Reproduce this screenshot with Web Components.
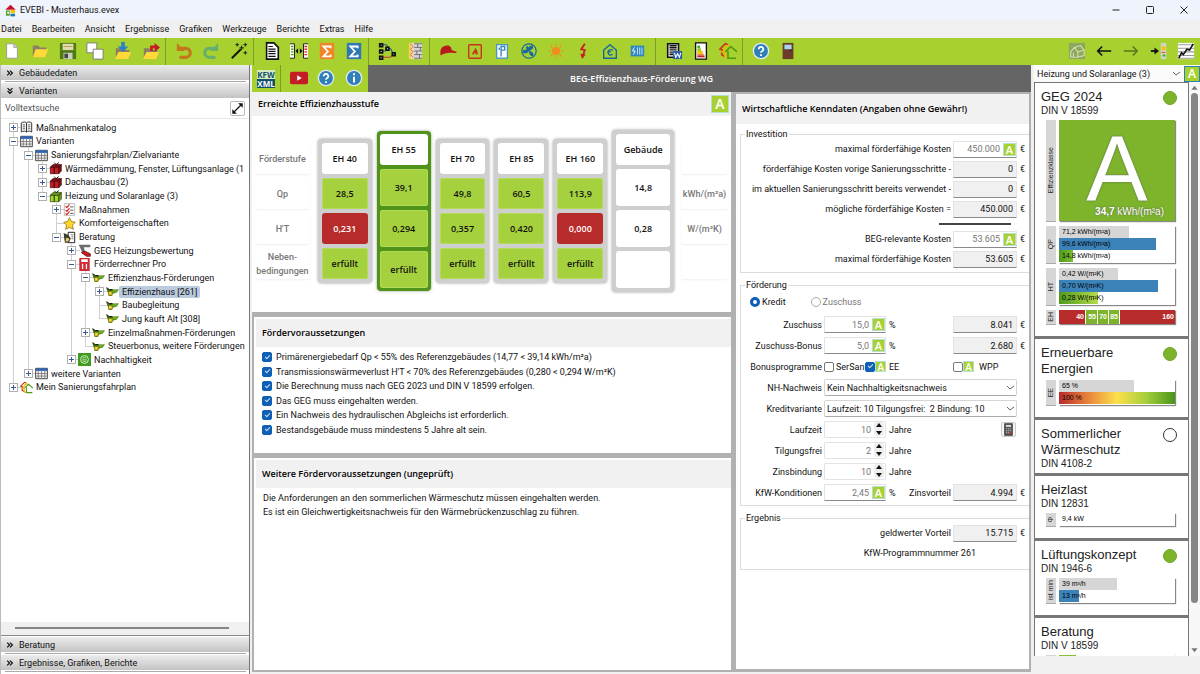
<!DOCTYPE html>
<html lang="de">
<head>
<meta charset="utf-8">
<title>EVEBI - Musterhaus.evex</title>
<style>
  html, body { height: 100%; }
  body {
    margin: 0; overflow: hidden; background: #f0f0f0; color: #111;
    font: 9px/12px Roboto, "Open Sans", sans-serif;
    --strong: 600 9px/12px "Open Sans", sans-serif;
    --lime: #a8d12f; --leaf: #7db42c; --band: #b1b1b1; --blue: #0f5fb5; --red: #b82b2b;
  }
</style>
</head>
<body>
<evebi-app></evebi-app>
<script>
const ICONS = {
  logo: '<path d="M2 9 10 1l8 8z" fill="#c8102e"/><path d="M3 10h6v8H3z" fill="#5aa02c"/><path d="M10 9h7v5h-7z" fill="#f4c400"/><path d="M10 15h7v4h-7z" fill="#1f77b4"/><path d="M5 12h3v3H5z" fill="#fff"/>',
  new: '<path d="M4 2h8l4 4v12H4z" fill="#fff" stroke="#999"/><path d="M12 2v4h4" fill="#ddd" stroke="#999"/>',
  open: '<path d="M2 4h6l2 2h7v10H2z" fill="#8c8160"/><path d="M5 8h14l-3 9H2z" fill="#ffd83a"/>',
  save: '<path d="M1 1h18v18H1z" fill="#4e7c12"/><path d="M4 2h12v7H4z" fill="#e0dcb0"/><path d="M5 5h10" stroke="#b99a50"/><path d="M5 12h10v7H5z" fill="#c8cfc0"/><path d="M6 13h4v5H6z" fill="#444"/>',
  copy: '<path d="M1 1h11v11H1z" fill="#fff" stroke="#777"/><path d="M8 8h11v11H8z" fill="#fff" stroke="#777"/>',
  import: '<path d="M2 7h6l2 2h7v9H2z" fill="#8c8160"/><path d="M5 11h14l-3 8H1z" fill="#ffd83a"/><path d="M8 0h4v5h4l-6 6-6-6h4z" fill="#2f80c2"/>',
  export: '<path d="M2 7h6l2 2h7v9H2z" fill="#8c8160"/><path d="M5 11h14l-3 8H1z" fill="#ffd83a"/><path d="M9 10V4h5V1l6 5-6 5V7h-2v3z" fill="#c41e24"/>',
  undo: '<path d="M5 7h7a4 4 0 0 1 0 10H5" fill="none" stroke="#c4771c" stroke-width="3.500"/><path d="M2 1v9h9z" fill="#c4771c"/>',
  redo: '<path d="M15 17H8A4 4 0 0 1 8 7h7" fill="none" stroke="#67b06c" stroke-width="3.500"/><path d="M18 1v9H9z" fill="#67b06c"/>',
  wand: '<path d="m2 18 10-10" stroke="#111" stroke-width="2.200"/><path d="M13 4v5M10.500 6.500h5M17 1v4M15 3h4M8 1v4M6 3h4M17 10v4M15 12h4" stroke="#111"/>',
  doc: '<path d="M4 1h8l5 5v13H4z" fill="#fff" stroke="#111" stroke-width="1.800"/><path d="M6 5h5M6 8h8M6 10.500h8M6 13h8M6 16h8" stroke="#111" stroke-width="1.300"/>',
  compare: '<path d="M0 2h5v16H0M20 2h-5v16h5" fill="#fff" stroke="#111"/><path d="M1 5h3M1 8h3M1 11h3M1 14h3" stroke="#5a9b1c" stroke-width="1.500"/><path d="M16 5h3M16 8h3M16 11h3M16 14h3" stroke="#d22" stroke-width="1.500"/><path d="m6 10 3-3v6zM14 10l-3-3v6z" fill="#111"/>',
  sumo: '<path d="M2 1h16v18H2z" fill="#f08426"/><path d="M14 7V5H6l5 5.500L6 16h8v-2" fill="none" stroke="#fff" stroke-width="2"/>',
  sumb: '<path d="M2 1h16v18H2z" fill="#2f78b4"/><path d="M14 7V5H6l5 5.500L6 16h8v-2" fill="none" stroke="#fff" stroke-width="2"/>',
  nodes: '<path d="M4 3h5c2 0 1 4 3 4 4 0 3 5 5 5" fill="none" stroke="#2457a0" stroke-width="1.200"/><path d="M4 10h4c2 0 1-3 4-3" fill="none" stroke="#2457a0" stroke-width="1.200"/><path d="M4 17h9c3 0 2-4 5-4" fill="none" stroke="#c33" stroke-width="1.200"/><g fill="#111"><path d="M1 1h5v5H1zM1 8h5v5H1zM1 15h5v5H1zM8 5h5v5H8zM15 11h5v5h-5z"/></g><path d="M3 3h1v1H3zM3 10h1v1H3zM3 17h1v1H3zM10 7h1v1h-1zM17 13h1v1h-1z" fill="#fff"/>',
  wall: '<path d="M3 1h2v18H3z" fill="#f5d23b"/><path d="M5 1h4v18H5z" fill="#f0d8b0"/><path d="M9 1h9v18H9z" fill="#d6d6d6"/><path d="M9 2h9M9 6h9M9 10h9M9 14h9M9 18h9M13 2v4M16 6v4M12 10v4M15 14v4" stroke="#666"/><path d="m5 2 3 3-3 3 3 3-3 3 3 3" stroke="#d55" fill="none"/>',
  cap: '<path d="M2 15C0 8 4 4 9 4c4 0 5 3 5 5l6 2c-1 2-5 1-8 1-4 0-7 1-10 3z" fill="#b71c1c"/>',
  flame: '<rect x="3" y="3" width="14" height="15" rx="1" fill="none" stroke="#c8321e" stroke-width="1.500"/><path d="M7 14c0-4 3-4 3-8 3 3 3 5 3 8h-2l-1-3-1 3z" fill="#c8321e"/>',
  meter: '<rect x="4" y="3" width="12" height="15" fill="#fff" stroke="#4a95c8" stroke-width="1.500"/><path d="M9 16V5h4v4H9M7 6v3" fill="none" stroke="#3585bd" stroke-width="1.500"/>',
  fan: '<circle cx="10" cy="10" r="8" fill="none" stroke="#1767a0" stroke-width="1.300"/><path d="M10 10c-1-2 0-6 3-6 3 1 2 4-3 6zM10 10c2 0 6 2 5 5-2 2-5 0-5-5zM10 10c-1 2-5 4-7 2-1-3 2-5 7-2zM10 10c-3-1-4-3-3-5 2-1 4 1 3 5z" fill="#1767a0"/>',
  sun: '<circle cx="10" cy="10" r="4.500" fill="#f58b1e"/><path d="M10 2v2M10 16v2M2 10h2M16 10h2M4 4l2 2M14 14l2 2M16 4l-2 2M6 14l-2 2" stroke="#f58b1e" stroke-width="1.500"/>',
  bolt: '<path d="M12 2 8 8l4 1-2 6" fill="none" stroke="#c41e24" stroke-width="2"/><path d="m7 13 2 6 4-5z" fill="#c41e24"/>',
  euro: '<path d="m3 9 7-6 7 6v9H3z" fill="none" stroke="#1767a0" stroke-width="1.500"/><path d="M13 9.500a3 3 0 1 0 0 4M7 11h4" fill="none" stroke="#1767a0" stroke-width="1.500"/>',
  radiator: '<rect x="3" y="4" width="15" height="12" fill="#2f87c0"/><path d="M10.500 6v8M13 6v8M15.500 6v8" stroke="#cfe6f5"/><path d="m7 6-2 4h3l-2 4" stroke="#fff" fill="none"/>',
  word: '<path d="M3 2h12v15H3z" fill="#fff" stroke="#111" stroke-width="1.800"/><path d="M5 4h8M5 6h8M5 8h8M5 10h8M5 12h4M5 14h4" stroke="#111" stroke-width="1.300"/><path d="M9 10h10v9H9z" fill="#2c5fa8"/><path d="m10.500 12 1.500 5 2-4 2 4 1.500-5" stroke="#fff" fill="none" stroke-width="1.200"/>',
  label: '<path d="M4 1h12v18H4z" fill="#fff" stroke="#111" stroke-width="1.500"/><path d="M6 4h3v3H6z" fill="#4a2"/><path d="M6 7h4v3H6z" fill="#9c2"/><path d="M6 10h6v3H6z" fill="#f5c400"/><path d="M6 13h7v2H6z" fill="#f08426"/><path d="M6 15h8v2H6z" fill="#c41e24"/>',
  houses: '<path d="M6 16 3 14l1-5-3-1 6-6 3 1" fill="none" stroke="#c8321e" stroke-width="1.800"/><path d="M9 17H7l-1-6H4l5-7 3 1" fill="none" stroke="#f5b400" stroke-width="1.800"/><path d="m7 11 6-6 7 6M10 10v8h9" fill="none" stroke="#4d9a16" stroke-width="1.800"/>',
  help: '<circle cx="10" cy="10" r="8.500" fill="#2f7fb8" stroke="#e0eaf2" stroke-width="1.500"/><path d="M7.500 8a2.500 2.500 0 1 1 3.500 2.300c-1 .5-1 .9-1 1.700M10 13.500v2" fill="none" stroke="#fff" stroke-width="2"/>',
  info: '<circle cx="10" cy="10" r="8.500" fill="#2f7fb8" stroke="#e0eaf2" stroke-width="1.500"/><path d="M10 8.500V15M10 4.800V7" stroke="#fff" stroke-width="2.200"/>',
  door: '<path d="M4 1h12v18H4z" fill="#6d3b2b"/><path d="M6 3h8v5H6z" fill="#a9d4ee"/><path d="M12 9h3v1h-3z" fill="#222"/>',
  home3d: '<path d="M1 1h18v18H1z" fill="#8fa75c"/><path d="m3 11 4-5 7-2 4 5v6l-8 2H3zM7 6l4 5v6M11 11l7-2M6 17v-5" fill="none" stroke="#d3dfb5" stroke-width="1.200"/>',
  left: '<path d="M3 10h15M8 5l-5 5 5 5" fill="none" stroke="#111" stroke-width="1.800"/>',
  right: '<path d="M2 10h15M12 5l5 5-5 5" fill="none" stroke="#55761c" stroke-width="1.600"/>',
  dock: '<path d="M1 10h5" stroke="#111" stroke-width="2"/><path d="M5 6v8l5-4z" fill="#111"/><path d="M12 1h6v18h-6z" fill="#d3d3c4"/><path d="M13 5h4v4h-4z" fill="#f5c400"/><path d="M13 11h4v1h-4z" fill="#d33"/><path d="M14 14h3v2h-3z" fill="#3a3"/>',
  chart: '<path d="M1 1h18v18H1z" fill="#fff"/><path d="M1 3h18M1 7h18M1 11h18M1 15h18M1 18h18" stroke="#999" stroke-width="1.200"/><path d="m2 18 3-6 2 2 4-6 3 1 4-7" fill="none" stroke="#111" stroke-width="1.800"/>',
  video: '<rect x="0" y="3" width="20" height="14" rx="2" fill="#c41e24"/><path d="m8 7 5 3-5 3z" fill="#fff"/>',
  book: '<path d="M2 3c3-2 6-2 8 0v14c-2-2-5-2-8 0zM18 3c-3-2-6-2-8 0v14c2-2 5-2 8 0z" fill="#fff" stroke="#333" stroke-width="1.500"/><path d="M4 6h4M4 9h4M4 12h4M12 6h4M12 9h4M12 12h4" stroke="#444" stroke-width="1.300"/>',
  table: '<path d="M1 2h18v16H1z" fill="#f2f2f2" stroke="#444" stroke-width="1.500"/><path d="M1 2h18v4H1z" fill="#3264b4"/><path d="M5 6v12M10 6v12M15 6v12M2 10h16M2 14h16" stroke="#777" stroke-width="1.300"/>',
  cubered: '<path d="M2 8h13v10H2z" fill="#c41e24" stroke="#400"/><path d="m2 8 4-4h13l-4 4zM19 4v10l-4 4V8z" fill="#801018" stroke="#400"/><path d="M8 8v10M11 4 8 1M11 4l4-3" stroke="#200" stroke-width="1.500"/>',
  cubegreen: '<path d="M2 8h13v10H2z" fill="#a5d82f" stroke="#230"/><path d="m2 8 4-4h13l-4 4zM19 4v10l-4 4V8z" fill="#6fa01c" stroke="#230"/><path d="M8 8v10M11 4 8 1M11 4l4-3" stroke="#120" stroke-width="1.500"/>',
  checks: '<path d="M2 1h16v18H2z" fill="#fff" stroke="#999"/><path d="m4 5 2 2 4-5M4 11l2 2 4-5M4 16l2 2 4-5" fill="none" stroke="#d22" stroke-width="1.800"/><path d="M11 6h5M11 11h5M11 16h5" stroke="#555" stroke-width="1.500"/>',
  star: '<path d="m10 1 3 6 6 1-4.500 4.500L16 19l-6-3-6 3 1.500-6.500L1 8l6-1z" fill="#ffd52e" stroke="#7a5a00"/>',
  advice: '<path d="M8 2h10v16H8z" fill="#fff" stroke="#222" stroke-width="1.500"/><path d="M12 6h4M13 9h3M13 12h3" stroke="#333"/><path d="m1 3 7 3 4 5-3 7H3l-1-6z" fill="#3b3a2a"/><path d="m5 10 5 2-2 4H4z" fill="#e6d264"/>',
  geg: '<path d="M1 1h18v4H9l2 8-5-1-3-7z" fill="#6c6c6c"/><path d="m5 13 6-2 8 4v4h-6z" fill="#c41e24" stroke="#500"/>',
  calcred: '<path d="M2 0h16v20H2z" fill="#d22832"/><path d="M5 2h10v4H5zM6 9h2v8H6zM12 9h2v8h-2z" fill="#fff"/>',
  bird: '<path d="m0 4 5 3h15l-4 5-5 1-2 4H4l-1-5z" fill="#3f6d12"/><path d="m10 8 9-1-4 5-5-1z" fill="#6fae22"/><path d="M4 10h6v6H4z" fill="#c9a91a"/><path d="M5 11h3v3H5z" fill="#f5e050"/><path d="m1 4 4 3h5" stroke="#111" fill="none" stroke-width="1.500"/>',
  eco: '<rect x="0" y="0" width="20" height="20" fill="#3f9b1e"/><circle cx="10" cy="10" r="6" fill="none" stroke="#d5efc4" stroke-width="1.500"/><path d="M7 9c2-3 5-2 6-1M7 12c2 2 5 1 6 0M7 10.500h6" fill="none" stroke="#d5efc4" stroke-width="1.300"/>',
  calc: '<path d="M4 1h12v18H4z" fill="#555" stroke="#222"/><path d="M6 3h8v3H6z" fill="#ddd"/><path d="M6 9h8M6 12h8M6 15h8" stroke="#bbb" stroke-width="1.500" stroke-dasharray="2 1"/><path d="M12 14h2v3h-2z" fill="#d22"/>',
  expand: '<path d="m5 15 10-10" stroke="#111" stroke-width="2"/><path d="M11 2h7v7zM2 11v7h7z" fill="#111"/>',
  chevr: '<path d="m3 4 6 6-6 6M10 4l6 6-6 6" fill="none" stroke="#111" stroke-width="3"/>',
  chevd: '<path d="m4 3 6 6 6-6M4 10l6 6 6-6" fill="none" stroke="#111" stroke-width="3"/>',
  min: '<path d="M3 10h14" stroke="#222" stroke-width="2"/>',
  max: '<rect x="3" y="3" width="14" height="14" rx="2" fill="none" stroke="#222" stroke-width="2"/>',
  close: '<path d="m3 3 14 14M17 3 3 17" stroke="#222" stroke-width="2"/>',
  up: '<path d="m3 15 7-9 7 9z" fill="#777"/>',
  down: '<path d="m3 5 7 9 7-9z" fill="#777"/>'
};

const define = (name, html, setup) => customElements.define(name, class extends HTMLElement {
  connectedCallback() {
    if (this.shadowRoot) return;
    const root = this.attachShadow({ mode: 'open' });
    root.innerHTML = typeof html === 'function' ? html(this) : html;
    if (setup) setup(root, this);
  }
});

define('ev-icon', el => `<style>
  :host { display: inline-block; width: 18px; height: 18px; flex: none; }
  svg { display: block; width: 100%; height: 100%; }
</style><svg viewBox="0 0 20 20" aria-hidden="true">${ICONS[el.getAttribute('name')]}</svg>`);

/* Button that switches a value back to "automatic" */
define('ev-auto', `<style>
  :host { display: inline-block; width: 13px; height: 13px; flex: none; }
  button { display: grid; place-items: center; width: 100%; height: 100%; padding: 0; border: 1px solid #b4e0d2;
    background: var(--lime); color: #fff; font: 600 var(--auto-size, 11px)/1 "Open Sans", sans-serif; }
</style><button type="button" aria-label="Automatik">A</button>`);

define('ev-tools', el => `<style>
  :host { display: grid; box-sizing: border-box; grid-auto-flow: column; grid-auto-columns: 1fr; height: 27px; padding-bottom: 1px; }
  :host([sep]) { border-left: 1px solid #7d9c2a; padding-left: 4px; }
  button { display: grid; place-items: center; padding: 0; border: 0; background: none; min-width: 0; }
</style>${el.getAttribute('icons').split(' ').map(n => `<button type="button" aria-label="${n}"><ev-icon name="${n}"></ev-icon></button>`).join('')}`);

define('ev-titlebar', `<style>
  :host { display: flex; align-items: center; height: 20px; padding: 0 10px 0 4px; background: #eff3fb; }
  ev-icon { width: 13px; height: 13px; }
  span { flex: 1; margin-left: 3px; }
  button { width: 13px; height: 13px; margin-left: 21px; padding: 0; border: 0; background: none; display: grid; place-items: center; }
  button ev-icon { width: 10px; height: 10px; }
</style><ev-icon name="logo"></ev-icon><span>EVEBI - Musterhaus.evex</span>
<button aria-label="Minimieren"><ev-icon name="min"></ev-icon></button><button aria-label="Maximieren"><ev-icon name="max"></ev-icon></button><button aria-label="Schließen"><ev-icon name="close"></ev-icon></button>`);

define('ev-menubar', `<style>
  :host { display: block; height: 18px; background: #f0f0f0; }
  nav { display: flex; gap: 10px; padding: 3px 1px; }
  a { color: inherit; text-decoration: none; }
</style><nav>${['Datei','Bearbeiten','Ansicht','Ergebnisse','Grafiken','Werkzeuge','Berichte','Extras','Hilfe'].map(t => `<a href="#">${t}</a>`).join('')}</nav>`);

define('ev-toolbar', `<style>
  :host { display: flex; height: 27px; background: var(--lime); overflow: hidden; }
  .file { width: 167px; margin-left: -2px; } .edit { width: 88px; } .calc { width: 115px; } .net { width: 61px; }
  .parts { width: 226px; padding-right: 4px; } .rep { width: 87px; } .help { width: 60px; } .view { width: 137px; margin-left: auto; }
</style>
<ev-tools class="file" icons="new open save copy import export"></ev-tools>
<ev-tools sep class="edit" icons="undo redo wand"></ev-tools>
<ev-tools sep class="calc" icons="doc compare sumo sumb"></ev-tools>
<ev-tools sep class="net" icons="nodes wall"></ev-tools>
<ev-tools sep class="parts" icons="cap flame meter fan sun bolt euro radiator"></ev-tools>
<ev-tools sep class="rep" icons="word label houses"></ev-tools>
<ev-tools sep class="help" icons="help door"></ev-tools>
<ev-tools class="view" icons="home3d left right dock chart"></ev-tools>`);

define('ev-section-head', el => `<style>
  :host { display: block; padding-bottom: 1px; background: #fff; }
  button { display: flex; align-items: center; gap: 5px; width: 100%; height: 15px; padding: 0 5px; border: 0;
    background: linear-gradient(#ececec, #c3c3c3); font: inherit; color: inherit; }
  ev-icon { width: 8px; height: 8px; }
  hr { margin: 1px 3px 0 4px; border: 0; border-top: 1px solid #aaa; }
  :host([open]) { padding: 0; } :host([open]) hr { display: none; }
</style><button type="button" aria-expanded="${el.hasAttribute('open')}"><ev-icon name="${el.hasAttribute('open') ? 'chevd' : 'chevr'}"></ev-icon><slot></slot></button><hr>`);

const TREE = [
  [0,'+','book','Maßnahmenkatalog'],[0,'-','table','Varianten'],[1,'-','table','Sanierungsfahrplan/Zielvariante'],
  [2,'+','cubered','Wärmedämmung, Fenster, Lüftungsanlage (1'],[2,'+','cubered','Dachausbau (2)'],[2,'-','cubegreen','Heizung und Solaranlage (3)'],
  [3,'+','checks','Maßnahmen'],[3,'','star','Komforteigenschaften'],[3,'-','advice','Beratung'],
  [4,'+','geg','GEG Heizungsbewertung'],[4,'-','calcred','Förderrechner Pro'],[5,'-','bird','Effizienzhaus-Förderungen'],
  [6,'+','bird','Effizienzhaus [261]',1],[6,'','bird','Baubegleitung'],[6,'','bird','Jung kauft Alt [308]'],
  [5,'+','bird','Einzelmaßnahmen-Förderungen'],[5,'','bird','Steuerbonus, weitere Förderungen'],
  [4,'+','eco','Nachhaltigkeit'],[1,'+','table','weitere Varianten'],[0,'+','houses','Mein Sanierungsfahrplan']
];
const INDENT = [8, 23, 37, 51, 66, 80, 94];
define('ev-tree', () => {
  const goesOn = (i, k) => { for (let j = i + 1; j < TREE.length; j++) { if (TREE[j][0] < k) return false; if (TREE[j][0] === k) return true; } return false; };
  const grey = 'linear-gradient(#cfcfcf,#cfcfcf)';
  const rows = TREE.map(([lv, sign, icon, text, sel], i) => {
    const bg = [`${grey} ${INDENT[lv] + 4}px 50% / 9px 1px no-repeat`, `${grey} ${INDENT[lv] + 4}px 0 / 1px 50% no-repeat`];
    for (let k = 0; k <= lv; k++) if (goesOn(i, k)) bg.push(`${grey} ${INDENT[k] + 4}px 0 / 1px 100% no-repeat`);
    return `<li role="treeitem" aria-level="${lv + 1}"${sel ? ' aria-selected="true"' : ''} style="padding-left:${INDENT[lv]}px;background:${bg.join()}">
      <i class="${sign ? 'box' : ''}${sign === '+' ? ' plus' : ''}"></i><ev-icon name="${icon}"></ev-icon><span>${text}</span></li>`;
  }).join('');
  return `<style>
  :host { display: block; overflow: hidden; }
  ul { list-style: none; margin: 0; padding: 0; display: grid; grid-auto-rows: 1fr; height: 273px; }
  li { display: flex; align-items: center; white-space: nowrap; min-height: 0; }
  i { width: 9px; height: 9px; box-sizing: border-box; flex: none; margin-right: 2px; }
  .box { border: 1px solid #b0b0b0; background: linear-gradient(#3b5b94,#3b5b94) 50% 50% / 5px 1px no-repeat #fff; }
  .plus { background: linear-gradient(#3b5b94,#3b5b94) 50% 50% / 5px 1px no-repeat, linear-gradient(#3b5b94,#3b5b94) 50% 50% / 1px 5px no-repeat #fff; }
  ev-icon { width: 13px; height: 13px; }
  span { padding: 0 3px; }
  [aria-selected] span { background: #b9cbdd; border-radius: 2px; }
</style><ul role="tree">${rows}</ul>`;
});

define('ev-sidebar', `<style>
  :host { display: flex; flex-direction: column; background: #fff; border-right: 1px solid #777; border-left: 1px solid #bbb; box-sizing: border-box; min-height: 0; overflow: hidden; padding-bottom: 1px; }
  .search { display: flex; align-items: center; height: 21px; padding: 0 4px 0 4px; border-bottom: 1px solid #e8e8e8; box-sizing: border-box; }
  input { flex: 1; min-width: 0; border: 0; padding: 0; font: inherit; background: none; outline: 0; }
  input::placeholder { color: #555; opacity: 1; }
  .search button { width: 15px; height: 15px; padding: 0; display: grid; place-items: center; background: #fff; border: 1px solid #bbb; border-radius: 2px; }
  .search ev-icon { width: 13px; height: 13px; }
  ev-tree { flex: 1; margin: 2px 2px 0 0; }
  .scroll { height: 14px; background: #f0f0f0; border-bottom: 1px solid #888; padding: 5px 20px 0 14px; box-sizing: border-box; margin-bottom: 1px; }
  .scroll div { height: 2px; background: #858585; }
</style>
<ev-section-head>Gebäudedaten</ev-section-head>
<ev-section-head open>Varianten</ev-section-head>
<div class="search"><input aria-label="Volltextsuche" placeholder="Volltextsuche"><button aria-label="Erweitern"><ev-icon name="expand"></ev-icon></button></div>
<ev-tree></ev-tree>
<div class="scroll"><div></div></div>
<ev-section-head>Beratung</ev-section-head>
<ev-section-head>Ergebnisse, Grafiken, Berichte</ev-section-head>`);

define('ev-page-head', `<style>
  :host { display: grid; grid-template-columns: 1fr auto 1fr; align-items: center; background: #656565; height: 27px; }
  .tools { display: flex; width: 116px; background: var(--lime); }
  .kfw { display: grid; place-items: center; width: 28px; padding: 0; border: 0; background: none; }
  .kfw span { display: block; width: 18px; font: 700 8px/9px "Open Sans", sans-serif; color: #10506e; text-align: center; background: #d5ecc0; }
  .kfw span + span { background: #10506e; color: #fff; }
  ev-tools { flex: 1; }
  h1 { margin: 0; font: var(--strong); color: #fff; }
</style><div class="tools"><button class="kfw"><div><span>KFW</span><span>XML</span></div></button><ev-tools sep icons="video help info"></ev-tools></div>
<h1>BEG-Effizienzhaus-Förderung WG</h1><div></div>`);

/* One column of the comparison: heading cell followed by its values */
define('ev-stage', el => `<style>
  :host { display: grid; box-sizing: border-box; width: 54px; grid-template-rows: 31px; grid-auto-rows: var(--row, 31px); gap: 4px;
    padding: 4px; border-radius: 4px; background: #cfcfcf; box-shadow: 0 0 3px #999; text-align: center; font: var(--strong); color: #111; }
  :host([kind=best]) { --row: 37px; padding: 3px; background: #4f9418; }
  :host([kind=building]) { --row: 37px; width: 62px; }
  :host([kind=labels]), :host([kind=units]) { padding: 4px 0; background: none; box-shadow: none; color: #777; font: 500 9px/14px Roboto, sans-serif; }
  :host([kind=labels]) { width: 55px; } :host([kind=units]) { width: 47px; }
  div { display: grid; place-items: center; border-radius: 3px; background: #fff; }
  :host([kind=labels]) div, :host([kind=units]) div { box-shadow: 0 1px 2px #f0f0f0; }
  .ok { background: #a6d13e; box-shadow: inset 0 0 0 1px #b3da58; } .bad { background: var(--red); color: #fff; }
</style>${el.getAttribute('cells').split('|').map(c => {
  const cls = c[0] === '+' ? 'ok' : c[0] === '-' ? 'bad' : '';
  return `<div class="${cls}"><span>${cls ? c.slice(1) : c}</span></div>`;
}).join('')}`);

define('ev-panel', `<style>
  :host { display: block; background: #fff; box-sizing: border-box; }
  header { display: flex; align-items: center; justify-content: space-between; box-sizing: border-box; height: var(--head, 28px); background: #f1f1f1; padding: 0 2px 0 6px; }
  h2 { margin: 0; font: var(--strong); color: #000; }
</style><header><h2><slot name="title"></slot></h2><slot name="action"></slot></header><slot></slot>`);

const TICK = `
  input[type=checkbox] { appearance: none; box-sizing: border-box; width: 10px; height: 10px; margin: 0; flex: none; border: 1px solid #777; border-radius: 2px; background: #fff; display: grid; place-items: center; }
  input[type=checkbox]:checked { background: var(--blue); border-color: var(--blue); }
  input[type=checkbox]:checked::after { content: ""; width: 4px; height: 2px; border: solid #cfe0f2; border-width: 0 0 1px 1px; transform: rotate(-45deg); margin-bottom: 2px; }`;

define('ev-main', `<style>${TICK}
  :host { display: flex; flex-direction: column; gap: 5px; background: var(--band); min-width: 0; }
  .stages { display: flex; align-items: center; gap: 5px; padding: 14px 3px 20px; }
  .stages [kind=labels] { margin-right: 3px; } .stages [kind=units] { margin-left: 2px; }
  .result { --head: 24px; }
  .result ev-auto { width: 18px; height: 18px; --auto-size: 14px; }
  .sub { margin-left: 2px; border: 2px solid #fff; border-right: 0; }
  .req { height: 136px; } .more { flex: 1; }
  ul { list-style: none; margin: 0; padding: 3px 6px 0; display: grid; grid-auto-rows: 1fr; height: 87px; }
  li, label { display: flex; align-items: center; gap: 4px; }
  p { margin: 0; padding: 3px 7px 0; line-height: 14px; }
</style>
<ev-panel class="result"><span slot="title">Erreichte Effizienzhausstufe</span><ev-auto slot="action"></ev-auto>
<div class="stages">
<ev-stage kind="labels" cells="Förderstufe|Qp|H'T|Neben-<br>bedingungen"></ev-stage>
<ev-stage cells="EH 40|+28,5|-0,231|+erfüllt"></ev-stage>
<ev-stage kind="best" cells="EH 55|+39,1|+0,294|+erfüllt"></ev-stage>
<ev-stage cells="EH 70|+49,8|+0,357|+erfüllt"></ev-stage>
<ev-stage cells="EH 85|+60,5|+0,420|+erfüllt"></ev-stage>
<ev-stage cells="EH 160|+113,9|-0,000|+erfüllt"></ev-stage>
<ev-stage kind="building" cells="Gebäude|14,8|0,28|"></ev-stage>
<ev-stage kind="units" cells="|kWh/(m²a)|W/(m²K)|"></ev-stage>
</div></ev-panel>
<ev-panel class="sub req"><span slot="title">Fördervoraussetzungen</span><ul>
${['Primärenergiebedarf Qp &lt; 55% des Referenzgebäudes (14,77 &lt; 39,14 kWh/m²a)','Transmissionswärmeverlust H\'T &lt; 70% des Referenzgebäudes (0,280 &lt; 0,294 W/m²K)','Die Berechnung muss nach GEG 2023 und DIN V 18599 erfolgen.','Das GEG muss eingehalten werden.','Ein Nachweis des hydraulischen Abgleichs ist erforderlich.','Bestandsgebäude muss mindestens 5 Jahre alt sein.'].map(t => `<li><label><input type="checkbox" checked>${t}</label></li>`).join('')}
</ul></ev-panel>
<ev-panel class="sub more"><span slot="title">Weitere Fördervoraussetzungen (ungeprüft)</span>
<p>Die Anforderungen an den sommerlichen Wärmeschutz müssen eingehalten werden.<br>Es ist ein Gleichwertigkeitsnachweis für den Wärmebrückenzuschlag zu führen.</p></ev-panel>`);

const sum = (id, label, value, auto) => `<label for="${id}">${label}</label><span class="field"><input id="${id}" value="${value}"${auto ? ' class="auto"' : ' readonly'}>${auto ? '<ev-auto></ev-auto>' : ''}</span><b>€</b>`;
const rate = (id, label, value) => `<label for="${id}">${label}</label><span class="field"><input id="${id}" class="auto" value="${value}"><ev-auto></ev-auto></span>`;
const years = (id, label, value) => `<label for="${id}">${label}</label><span class="field"><input id="${id}" class="spin" type="number" value="${value}"><svg class="arrows" viewBox="0 0 10 14" aria-hidden="true"><rect width="10" height="14" rx="3" fill="#eee"/><path d="m2 5 3-4 3 4zM2 9l3 4 3-4z" fill="#111"/></svg></span><span class="unit">Jahre</span>`;
const out = (id, label, value) => `<span class="field"><input id="${id}" aria-label="${label}" value="${value}" readonly></span><b>€</b>`;

define('ev-economics', `<style>${TICK}
  :host { display: flex; flex-direction: column; background: #fff; box-sizing: border-box; border: solid var(--band); border-width: 2px 2px 3px 0; min-width: 0; }
  ev-panel { --head: 30px; }
  fieldset { margin: 0 0 7px 4px; padding: 0; border: 1px solid #dcdcdc; border-right: 0; min-width: 0; }
  ev-panel + fieldset { margin-top: 5px; }
  legend { margin-left: 4px; padding: 0 1px; line-height: 10px; }
  .invest { display: grid; grid-template-columns: 1fr 64px 12px; grid-auto-rows: 20px; align-items: center; padding-bottom: 3px; }
  .grant { display: grid; grid-template-columns: 83px 62px 1fr 64px 12px; grid-auto-rows: 21px; align-items: center; padding-bottom: 2px; }
  .result { padding-bottom: 6px; }
  label { text-align: right; padding-right: 2px; white-space: nowrap; }
  b { font-weight: 400; padding-left: 3px; }
  hr { grid-column: 1 / -1; justify-self: end; width: 72px; height: 0; margin: 0 18px 0 0; border: 0; border-top: 2px solid #444; }
  .invest.main { grid-template-rows: repeat(4, 20px) 10px; }
  .field { position: relative; display: block; height: 17px; }
  .field input { box-sizing: border-box; width: 100%; height: 17px; margin: 0; padding: 0 3px; text-align: right; font: inherit; color: #111; background: #f0f0f0;
    border: 1px solid #e3e3e3; border-bottom-color: #8a8a8a; border-radius: 1px; }
  .field .auto, .field .spin { background: #fff; color: #777; padding-right: 16px; appearance: textfield; }
  .field .spin { padding-right: 14px; border-bottom-color: #e3e3e3; }
  input::-webkit-inner-spin-button { display: none; }
  .field ev-auto { position: absolute; right: 1px; top: 2px; }
  .arrows { position: absolute; right: 2px; top: 1px; width: 10px; height: 14px; }
  .unit { padding-left: 3px; }
  .split { display: flex; justify-content: space-between; }
  .radios { display: flex; height: 24px; align-items: center; padding-left: 9px; gap: 25px; }
  .radios label { display: flex; align-items: center; gap: 2px; padding: 0; } .radios .off { color: #777; }
  input[type=radio] { appearance: none; box-sizing: border-box; width: 10px; height: 10px; margin: 0; border: 1px solid #aaa; border-radius: 50%; background: #fff; }
  input[type=radio]:checked { border: 3px solid var(--blue); }
  .wide { grid-column: 2 / 5; display: grid; position: relative; }
  select { appearance: none; width: 100%; height: 17px; box-sizing: border-box; padding: 0 2px; border: 1px solid #d5d5d5; border-bottom-color: #aaa; border-radius: 2px; background: #fff; font: inherit; color: inherit; white-space: pre; }
  .wide svg { position: absolute; right: 3px; top: 5px; width: 7px; height: 7px; }
  .bonus { display: flex; align-items: center; }
  .bonus label { text-align: left; padding: 0 1px 0 2px; }
  .bonus ev-auto { width: 11px; height: 11px; --auto-size: 10px; }
  .bonus.right { grid-column: 4 / 6; } .bonus.right label { padding-left: 5px; }
  .ee { text-align: left; padding-left: 3px; }
  .calc { grid-column: 4; justify-self: end; width: 15px; height: 15px; padding: 0; display: grid; place-items: center; border: 1px solid #ccc; border-radius: 2px; background: #f5f5f5; margin-right: 1px; }
  .calc ev-icon { width: 13px; height: 13px; }
  .gap { grid-column: 4 / 6; }
  .program { grid-column: 1 / -1; text-align: right; padding-right: 53px; }
</style>
<ev-panel><span slot="title">Wirtschaftliche Kenndaten (Angaben ohne Gewähr!)</span></ev-panel>
<fieldset><legend>Investition</legend><div class="invest main">
${sum('max1', 'maximal förderfähige Kosten', '450.000', 1)}
${sum('prev', 'förderfähige Kosten vorige Sanierungsschritte -', '0')}
${sum('used', 'im aktuellen Sanierungsschritt bereits verwendet -', '0')}
${sum('poss', 'mögliche förderfähige Kosten =', '450.000')}
<hr>
${sum('beg', 'BEG-relevante Kosten', '53.605', 1)}
${sum('max2', 'maximal förderfähige Kosten', '53.605')}
</div></fieldset>
<fieldset><legend>Förderung</legend>
<div class="radios"><label><input type="radio" name="art" checked>Kredit</label><label class="off"><input type="radio" name="art">Zuschuss</label></div>
<div class="grant">
${rate('zu', 'Zuschuss', '15,0')}<span class="unit">%</span>${out('zuv', 'Zuschuss Betrag', '8.041')}
${rate('zb', 'Zuschuss-Bonus', '5,0')}<span class="unit">%</span>${out('zbv', 'Bonus Betrag', '2.680')}
<label for="ser">Bonusprogramme</label><span class="bonus"><input type="checkbox" id="ser"><label for="ser">SerSan</label><input type="checkbox" id="ee" checked><ev-auto></ev-auto></span><label for="ee" class="ee">EE</label><span class="bonus right"><input type="checkbox" id="wpp"><ev-auto></ev-auto><label for="wpp">WPP</label></span>
<label for="nh">NH-Nachweis</label><span class="wide"><select id="nh"><option>Kein Nachhaltigkeitsnachweis</option></select><svg viewBox="0 0 7 7"><path d="m0 2 3 3 4-3" fill="none" stroke="#666"/></svg></span><i></i>
<label for="kv">Kreditvariante</label><span class="wide"><select id="kv"><option>Laufzeit: 10 Tilgungsfrei: &nbsp;2 Bindung: 10</option></select><svg viewBox="0 0 7 7"><path d="m0 2 3 3 4-3" fill="none" stroke="#666"/></svg></span><i></i>
${years('lz', 'Laufzeit', '10')}<button class="calc" aria-label="Rechner"><ev-icon name="calc"></ev-icon></button><i></i>
${years('tf', 'Tilgungsfrei', '2')}<i class="gap"></i>
${years('zi', 'Zinsbindung', '10')}<i class="gap"></i>
${rate('kfw', 'KfW-Konditionen', '2,45')}<span class="unit split">%<label for="zv">Zinsvorteil</label></span>${out('zv', 'Zinsvorteil', '4.994')}
</div></fieldset>
<fieldset><legend>Ergebnis</legend><div class="invest result">
${sum('gv', 'geldwerter Vorteil', '15.715')}
<span class="program">KfW-Programmnummer 261</span></div></fieldset>`);

/* Result tile in the right-hand overview */
define('ev-tile', el => `<style>
  :host { display: block; flex: none; background: #fff; padding: 6px 11px 12px 6px; color: #222; font-family: "Liberation Sans", Arial, sans-serif; }
  :host([plain]) { padding-bottom: 3px; }
  header { display: flex; justify-content: space-between; align-items: flex-start; }
  h2 { margin: 0; font: 400 13px/16px "Liberation Sans", Arial, sans-serif; }
  h3 { margin: 0; font: 400 10px/12px "Liberation Sans", Arial, sans-serif; }
  i { box-sizing: border-box; width: 14px; height: 14px; margin-top: 2px; border-radius: 50%; background: var(--leaf); border: 1px solid #70a524; flex: none; }
  i.open { background: #fff; border-color: #333; }
  .body { display: flex; flex-direction: column; gap: 5px; margin: 3px 2px 0 5px; }
</style><header><h2>${el.getAttribute('name')}</h2>${el.hasAttribute('state') ? `<i class="${el.getAttribute('state')}"></i>` : ''}</header>
${el.hasAttribute('norm') ? `<h3>${el.getAttribute('norm')}</h3>` : ''}${el.hasAttribute('plain') ? '' : '<div class="body"><slot></slot></div>'}`);

define('ev-gauge', el => `<style>
  :host { display: grid; grid-template-columns: 10px 1fr; gap: 3px; }
  .tag { display: grid; place-items: center; background: #d6d6d6; box-shadow: 0 1px 0 #aaa; overflow: hidden; min-height: 0; height: 100%; }
  .tag span { writing-mode: vertical-rl; transform: rotate(180deg); font: 7px/10px "Liberation Sans", Arial, sans-serif; white-space: nowrap; }
  .box { box-shadow: 1px 1px 1px #888; min-height: 12px; }
</style><div class="tag"><span>${el.getAttribute('tag')}</span></div><div class="box"><slot></slot></div>`);

define('ev-bar', el => `<style>
  :host { display: block; height: 12px; font: 7px/12px "Liberation Sans", Arial, sans-serif; color: #000; white-space: nowrap; }
  :host(:last-child) { padding-bottom: 1px; }
  div { width: ${el.getAttribute('fill')}%; height: 100%; background: ${el.getAttribute('paint')}; text-indent: 3px; }
</style><div><slot></slot></div>`);

define('ev-overview', `<style>
  :host { display: flex; flex-direction: column; min-height: 0; padding-bottom: 18px; background: #f0f0f0; }
  .pick { display: flex; height: 17px; align-items: center; background: #fafafa; }
  select { appearance: none; flex: 1; min-width: 0; height: 15px; border: 0; padding: 0 3px; background: #fbfbfb; font: inherit; color: inherit; }
  .pick svg { width: 7px; height: 7px; margin-right: 4px; }
  ev-auto { width: 16px; height: 16px; --auto-size: 12px; outline: 1px solid #2f80b0; outline-offset: -1px; }
  .view { flex: 1; min-height: 0; display: grid; grid-template-columns: 1fr 11px; }
  .tiles { display: flex; flex-direction: column; gap: 3px; overflow: hidden; min-height: 0; background: #777; padding: 0 1px; border-top: 1px solid #777; box-sizing: border-box; }
  .bar { display: flex; flex-direction: column; align-items: center; background: #f7f7f7; min-height: 0; padding: 1px 0; }
  .bar ev-icon { width: 9px; height: 9px; }
  .bar div { width: 7px; height: 510px; flex: 0 1 auto; margin: 1px 0 auto; border-radius: 4px; background: #868686; }
  .class { height: 101px; background: var(--leaf); color: #fff; text-align: center; text-shadow: 0 0 2px #555; display: grid; grid-template-rows: 85px 12px; }
  .class strong { font: 400 92px/98px "Liberation Sans", Arial, sans-serif; }
  .class p { margin: 0 11px 0 0; text-align: right; font: 10px/14px "Liberation Sans", Arial, sans-serif; }
  .eh { display: grid; grid-template-columns: 26px 11px 10px 10px 1fr; gap: 1px; height: 14px; font: 700 7px/14px "Liberation Sans", Arial, sans-serif; color: #fff; text-align: right; }
  .eh span { background: var(--leaf); padding-right: 1px; } .eh .r { background: var(--red); }
</style>
<div class="pick"><select aria-label="Variante"><option>Heizung und Solaranlage (3)</option></select><svg viewBox="0 0 7 7"><path d="m0 2 3 3 4-3" fill="none" stroke="#666"/></svg><ev-auto></ev-auto></div>
<div class="view"><div class="tiles">
<ev-tile name="GEG 2024" norm="DIN V 18599" state="ok">
  <ev-gauge tag="Effizienzklasse"><div class="class"><strong>A</strong><p><b>34,7</b> kWh/(m²a)</p></div></ev-gauge>
  <ev-gauge tag="QP"><ev-bar fill="60" paint="#d6d6d6">71,2 kWh/(m²a)</ev-bar><ev-bar fill="84" paint="#3b82b8">99,6 kWh/(m²a)</ev-bar><ev-bar fill="12" paint="linear-gradient(90deg,#4f9a1c,#7fbc30)">14,8 kWh/(m²a)</ev-bar></ev-gauge>
  <ev-gauge tag="HT"><ev-bar fill="51" paint="#d6d6d6">0,42 W/(m²K)</ev-bar><ev-bar fill="85" paint="#3b82b8">0,70 W/(m²K)</ev-bar><ev-bar fill="34" paint="linear-gradient(90deg,#4f9a1c,#b5dc4a)">0,28 W/(m²K)</ev-bar></ev-gauge>
  <ev-gauge tag="EH"><div class="eh"><span class="r">40</span><span>55</span><span>70</span><span>85</span><span class="r">160</span></div></ev-gauge>
</ev-tile>
<ev-tile name="Erneuerbare<br>Energien" state="ok"><ev-gauge tag="EE"><ev-bar fill="65" paint="#d6d6d6">65 %</ev-bar><ev-bar fill="100" paint="linear-gradient(90deg,#b82b2b,#e8843c 25%,#fde04a 50%,#a5d03c 75%,#4a9418)">100 %</ev-bar></ev-gauge></ev-tile>
<ev-tile name="Sommerlicher<br>Wärmeschutz" norm="DIN 4108-2" state="open" plain></ev-tile>
<ev-tile name="Heizlast" norm="DIN 12831"><ev-gauge tag="Φ"><ev-bar fill="0" paint="none">9,4 kW</ev-bar></ev-gauge></ev-tile>
<ev-tile name="Lüftungskonzept" norm="DIN 1946-6" state="ok"><ev-gauge tag="ist min"><ev-bar fill="50" paint="#d6d6d6">39 m³/h</ev-bar><ev-bar fill="17" paint="#3b82b8">13 m³/h</ev-bar></ev-gauge></ev-tile>
<ev-tile name="Beratung" norm="DIN V 18599"><ev-gauge tag=""><ev-bar fill="15" paint="#8bc034"></ev-bar></ev-gauge></ev-tile>
</div><div class="bar"><ev-icon name="up"></ev-icon><div></div><ev-icon name="down"></ev-icon></div></div>`);

define('evebi-app', `<style>
  :host { display: flex; flex-direction: column; height: 100vh; overflow: hidden; }
  .work { flex: 1; min-height: 0; display: grid; grid-template-columns: 250px minmax(0, 1fr) 166px; }
  .page { display: grid; grid-template-rows: 27px minmax(0, 1fr); min-height: 0; margin: 0 3px 2px 2px; }
  .cols { display: grid; grid-template-columns: minmax(0, 1fr) 295px; column-gap: 5px; background: var(--band); min-height: 0; }
  ev-main { padding-bottom: 2px; min-height: 0; }
</style>
<ev-titlebar></ev-titlebar><ev-menubar></ev-menubar><ev-toolbar></ev-toolbar>
<div class="work"><ev-sidebar></ev-sidebar>
<div class="page"><ev-page-head></ev-page-head><div class="cols"><ev-main></ev-main><ev-economics></ev-economics></div></div>
<ev-overview></ev-overview></div>`);
</script>
</body>
</html>
